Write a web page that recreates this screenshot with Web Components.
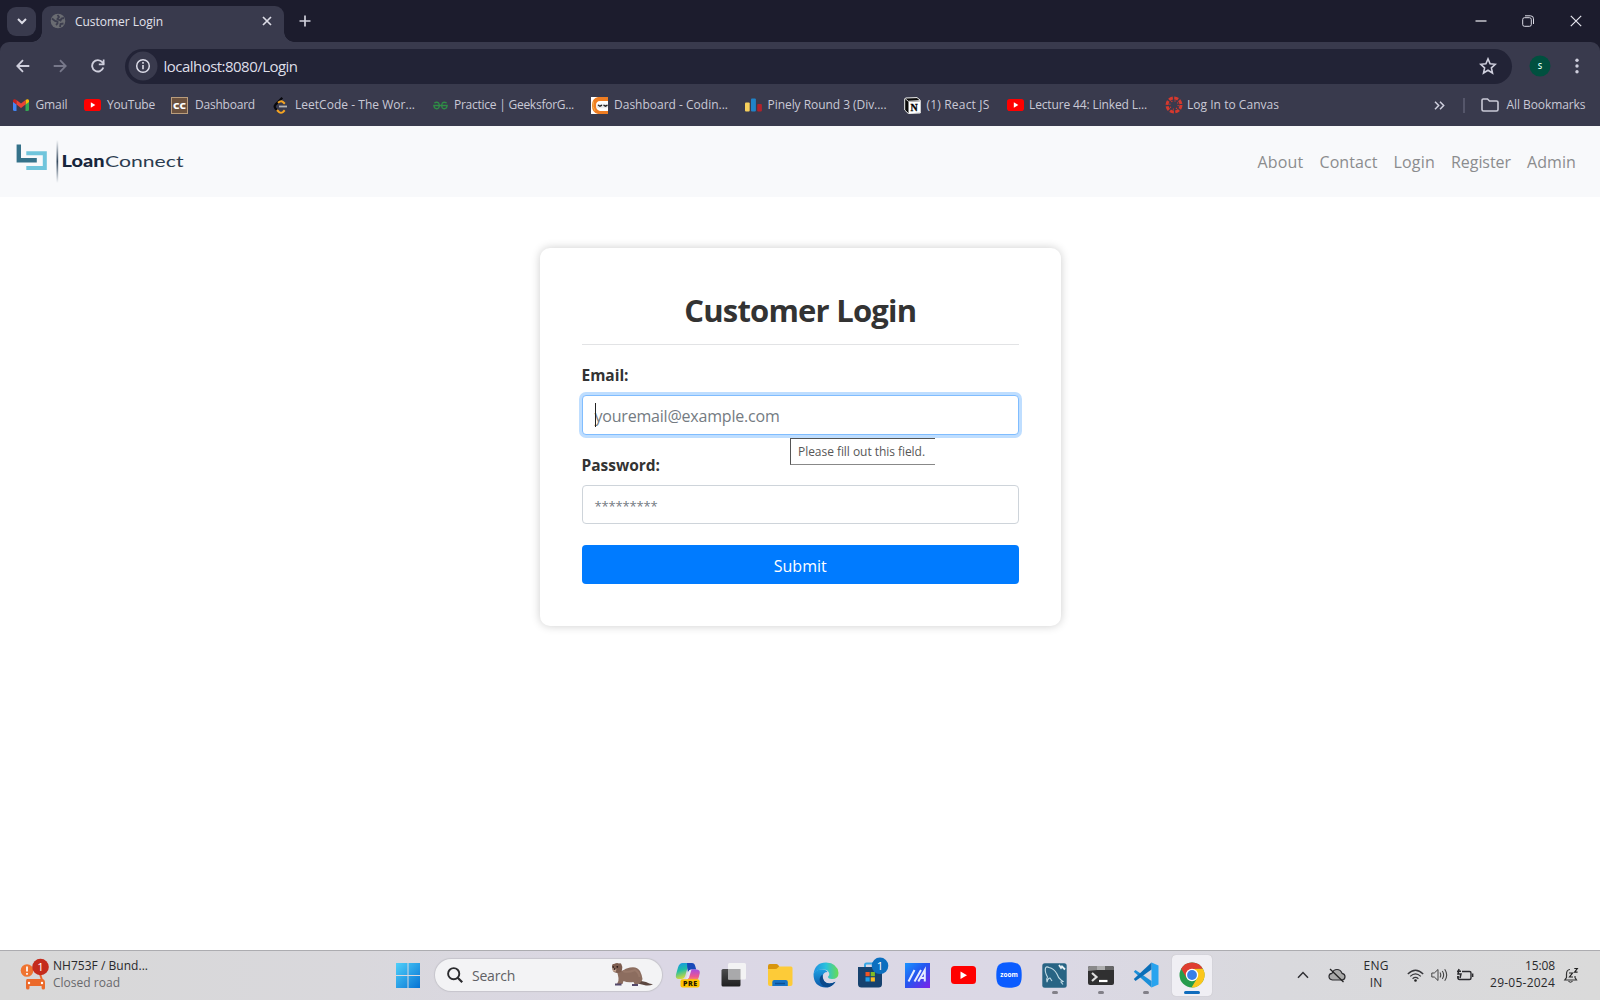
<!DOCTYPE html>
<html lang="en">
<head>
<meta charset="utf-8">
<title>Customer Login</title>
<style>
html,body{margin:0;width:1600px;height:1000px;overflow:hidden;background:#fff;font-family:"Open Sans","Noto Sans",sans-serif}
</style>
</head>
<body>
<desktop-screen></desktop-screen>
<script>
const icons = {
chevDown:[12,12,'<path d="M2 4l4 4 4-4" fill="none" stroke="#dcdce6" stroke-width="2"/>'],
globe:[16,16,'<circle cx="8" cy="8" r="7.300" fill="#6a6c72"/><path d="M2 5.500L5 8l2.500.5v2L6 12M7.500 2L9 4l-1.500 2 3 1.500 1-2L14 5M10 14l.5-3 3-.5" fill="none" stroke="#3c3d4e" stroke-width="1.800"/>'],
close:[10,10,'<path d="M1 1l8 8M9 1L1 9" stroke="#dcdce6" stroke-width="1.700"/>'],
plus:[12,12,'<path d="M6 .5v11M.5 6h11" stroke="#cfcfdb" stroke-width="1.700"/>'],
min:[12,12,'<path d="M.5 6h11" stroke="#f0f0f5" stroke-width="1.200"/>'],
restore:[12,12,'<rect x=".7" y="2.700" width="8.600" height="8.600" rx="1.800" fill="none" stroke="#dcdce6"/><path d="M3 .8h5.500a3 3 0 0 1 3 3V9" fill="none" stroke="#dcdce6"/>'],
winClose:[12,12,'<path d="M.8.8l10.400 10.400M11.200.8L.8 11.200" stroke="#e6e6ee" stroke-width="1.200"/>'],
back:[14,14,'<path d="M13.300 7H1.500M7 1.200L1.300 7 7 12.800" fill="none" stroke="#cfcfdd" stroke-width="1.800"/>'],
fwd:[14,14,'<path d="M.7 7h11.800M7 1.200L12.700 7 7 12.800" fill="none" stroke="#77788a" stroke-width="1.800"/>'],
reload:[14,14,'<path d="M12.300 8.500a5.700 5.700 0 1 1-1-5.300l1.500 1.600" fill="none" stroke="#cfcfdd" stroke-width="1.900"/><path d="M13.500.5v5.700H7.800V4.500h4V.5z" fill="#cfcfdd"/>'],
info:[30,30,'<circle cx="15" cy="15" r="14.500" fill="#393a4d"/><circle cx="15" cy="15" r="6.300" fill="none" stroke="#dcdce8" stroke-width="1.500"/><path d="M15 14v4.200M15 11v1.700" stroke="#dcdce8" stroke-width="1.600"/>'],
star:[18,18,'<path d="M9 1.900l2.100 4.900 5.200.5-3.900 3.500 1.100 5.200L9 13.300 4.500 16l1.100-5.200-3.900-3.500 5.200-.5z" fill="none" stroke="#cfcfdd" stroke-width="1.600"/>'],
avatar:[22,22,'<circle cx="11" cy="11" r="10.500" fill="#00503f"/><text x="11" y="13.800" font-size="8" font-weight="600" text-anchor="middle" fill="#dfe">S</text>'],
dots:[4,16,'<circle cx="2" cy="2.300" r="1.700" fill="#cfcfdd"/><circle cx="2" cy="8" r="1.700" fill="#cfcfdd"/><circle cx="2" cy="13.700" r="1.700" fill="#cfcfdd"/>'],
gmail:[16,12,'<path d="M0 2v8.500Q0 12 1.500 12h2V5z" fill="#4285f4"/><path d="M16 2v8.500q0 1.500-1.500 1.500h-2V5z" fill="#34a853"/><path d="M12.500 1.500V5.500L16 3V1.800C16 0 14.200-.4 12.500.9z" fill="#fbbc04"/><path d="M0 3v-1.200C0 0 1.800-.4 3.500.9V5.500z" fill="#c5221f"/><path d="M3.500 1l4.500 3.500L12.500 1v4.500L8 9 3.500 5.500z" fill="#ea4335"/>'],
yt:[17,12,'<rect width="17" height="12" rx="2.800" fill="#f00"/><path d="M6.800 3.300v5.400L11.300 6z" fill="#fff"/>'],
cc:[17,17,'<rect x=".5" y=".5" width="16" height="16" fill="#6b513f" stroke="#b99c7c"/><text x="8.500" y="12" font-size="9.500" font-weight="800" text-anchor="middle" fill="#fff" textLength="13" lengthAdjust="spacingAndGlyphs">CC</text>'],
leet:[15,17,'<path d="M9.300.8L2.500 7.600Q.8 9.600 2.500 11.500L4 13" fill="none" stroke="#08080d" stroke-width="2.200"/><path d="M4 13l2 2q2 1.500 4 0l1.700-1.700M5 5.700Q8 3.300 10 5l1.800 1.800" fill="none" stroke="#f5a422" stroke-width="2.100"/><path d="M6 9.500h8" stroke="#b3b3b3" stroke-width="1.800"/>'],
gfg:[15,9,'<path d="M.2 4.500h14.600M1.300 2Q4 .5 5.600 2 7 4.500 5.600 7 3.500 8.600 1.500 6.800L1 5M13.700 2Q11 .5 9.400 2 8 4.500 9.400 7q2.100 1.600 4.100-.2L14 5" fill="none" stroke="#2f8d46" stroke-width="1.300"/>'],
ninja:[17,17,'<rect width="17" height="17" fill="#fff"/><path d="M17 0H7Q1 1 1 8.500T7 17h10v-3H9Q5 13 5 8.500T9 4h8z" fill="#ef7d22"/><path d="M2.500 4.500Q1 10 4 14" stroke="#f7ae48" fill="none"/><rect x="5.500" y="6.700" width="11.500" height="4.500" rx="2" fill="#e9e9ec"/><path d="M7 8l2 1.200 2-1M12.500 8.200l2 1 2-1" stroke="#222" stroke-width="1.300" fill="none"/>'],
cf:[17,14,'<rect y="4.500" width="4.700" height="9" rx="1" fill="#f7cf5c"/><rect x="6" y=".5" width="4.900" height="13" rx="1" fill="#2083c9"/><rect x="12.200" y="6" width="4.700" height="7.500" rx="1" fill="#b1222b"/>'],
notion:[17,17,'<path d="M1.500 1L13 .6l3.300 2.700V16L4.300 16.500.7 13V2z" fill="#080808" stroke="#f3f3f3" stroke-width="1"/><path d="M1.300 1.800l3 2.500L16 3.600" fill="none" stroke="#f3f3f3" stroke-width=".9"/><path d="M4.500 4.700l11.500-.5v11.500l-11.500.6z" fill="#fff"/><text x="10.200" y="13.900" font-size="10" font-weight="700" font-family="Liberation Serif" text-anchor="middle" fill="#000" stroke="#000" stroke-width=".3">N</text>'],
canvas:[18,18,'<circle cx="9" cy="9" r="7" fill="none" stroke="#d5392e" stroke-width="3" stroke-dasharray="4.100 1.400"/><circle cx="9" cy="9" r="4.200" fill="none" stroke="#d5392e" stroke-width="1.200" stroke-dasharray="1.100 2.200"/>'],
more:[11,9,'<path d="M1 .7l3.700 3.800L1 8.300M6 .7l3.700 3.800L6 8.300" fill="none" stroke="#cfcfdd" stroke-width="1.500"/>'],
folder:[18,14,'<path d="M1 2.300Q1 1 2.300 1h4.200l2 2h7Q17 3 17 4.300v7.200q0 1.500-1.500 1.500h-13Q1 13 1 11.500z" fill="none" stroke="#c9c9d6" stroke-width="1.600"/>'],
logo:[170,46,'<defs><linearGradient id="v" x2="0" y2="1"><stop stop-color="#34495e" stop-opacity="0"/><stop offset=".5" stop-color="#34495e"/><stop offset="1" stop-color="#34495e" stop-opacity="0"/></linearGradient></defs><path d="M10.300 14.200h18.500v14.800H10.300" fill="none" stroke="#70c5dc" stroke-width="4"/><path d="M2.800 5.500v15.800h18" fill="none" stroke="#35728a" stroke-width="4.400"/><rect x="40.500" y="1" width="1.700" height="43" fill="url(#v)"/><text x="45.500" y="27.500" font-family="Lato" font-weight="900" font-size="16" fill="#17263c" textLength="43" lengthAdjust="spacingAndGlyphs">Loan</text><text x="89" y="27.500" font-family="Lato" font-size="16" fill="#2b3c50" textLength="78.500" lengthAdjust="spacingAndGlyphs">Connect</text>'],
road:[30,32,'<circle cx="7" cy="12.500" r="6.300" fill="#ef7430"/><path d="M7 8.500v5M7 15v1.700" stroke="#fff" stroke-width="1.700"/><path d="M20 16l2 6" stroke="#e8642a" stroke-width="2"/><path d="M7 21h15q3 0 3 4v5q0 1.500-1.700 1.500T21.600 30v-2H9.500v2q0 1.500-1.700 1.500T6 30v-6q0-3 1-3z" fill="#eb6a2b"/><circle cx="9" cy="25" r="1.200" fill="#fff"/><circle cx="22" cy="25" r="1.200" fill="#fff"/><circle cx="20.500" cy="9" r="8.300" fill="#c42b1c"/><text x="20.500" y="13.200" font-size="11.500" text-anchor="middle" fill="#fff">1</text>'],
windows:[24,25,'<defs><linearGradient id="a" x2="1" y2="1"><stop stop-color="#4fd0fa"/><stop offset="1" stop-color="#0672d3"/></linearGradient></defs><path d="M0 0h11.500v12H0zM12.500 0H24v12H12.500zM0 13h11.500v12H0zM12.500 13H24v12H12.500z" fill="url(#a)"/>'],
search:[16,16,'<circle cx="6.700" cy="6.700" r="5.600" fill="none" stroke="#2b2b2e" stroke-width="1.900"/><path d="M10.700 10.700l4.500 4.500" stroke="#2b2b2e" stroke-width="2.200"/>'],
otter:[44,26,'<path d="M27 17q5 3 9 3 3 2 7 2.300-4 2-9 .7-6-1-9-3z" fill="#5c4740"/><path d="M7 9.500q3-1 6-1 2-2 7-3 7-1.500 10 3.500 2 4 2.500 8-1 4-5 5h-3l-1-2q-6 1-10-1l-1 3H7q2-3 1.500-6T7 9.500z" fill="#8c6d5f"/><path d="M13 9q5 2 12-1 4 2 4.500 7" fill="none" stroke="#987869" stroke-width="2"/><path d="M2 4Q2 1.500 4 2q3-1.500 5-.5 2-.7 2.500 1Q13 5 12 8t-5 3Q3 10.500 2.500 7.500z" fill="#7d5d50"/><path d="M2.500 6.500Q4 5 6.500 7.500l-1 2.500Q3 9.500 2.500 8z" fill="#c8a996"/><circle cx="3.200" cy="5" r=".8" fill="#211"/><circle cx="7.300" cy="4.800" r=".9" fill="#211"/><circle cx="4.500" cy="7" r="1" fill="#322"/><path d="M5 22.500h6.500M22 23h6" stroke="#55496b" stroke-width="2"/>'],
copilot:[26,26,'<defs><linearGradient id="b" x2=".3" y2="1"><stop stop-color="#1793ee"/><stop offset=".5" stop-color="#20bda4"/><stop offset="1" stop-color="#d5d93a"/></linearGradient><linearGradient id="c" x2="0" y2="1"><stop stop-color="#a64de0"/><stop offset=".6" stop-color="#ed5691"/><stop offset="1" stop-color="#fa9c58"/></linearGradient></defs><path d="M7.500 1h9q-3 1-4 5l-2.300 8q-1 3-4 3H4Q0 17 1 12.500l2-7Q4.300 1 7.500 1z" fill="url(#b)"/><path d="M12 1h5q2.500 0 3.200 3l1 3.500H17q-3 0-4 3-1-5-1-9.500z" fill="#1749b8"/><path d="M16.500 7.500H21q4.500 0 3.700 4L23.500 16q-1 3-5 3H10q3-1 3.700-4l1-5q.5-2.500 1.800-2.500z" fill="url(#c)"/><path d="M13 10.500q1-3 3.500-3l-2.500 8q-1 2-3 2z" fill="#e9e3f3"/><rect x="5.500" y="17.200" width="19" height="8.300" rx="2" fill="#ffc300"/><text x="15" y="23.900" font-size="7" font-weight="800" text-anchor="middle" fill="#241900" textLength="14">PRE</text>'],
taskview:[26,26,'<defs><linearGradient id="t" x2="0" y2="1"><stop stop-color="#4c4c4e"/><stop offset="1" stop-color="#1f1f20"/></linearGradient></defs><rect x=".5" y="7" width="19" height="17.500" rx="1.500" fill="url(#t)"/><rect x="7" y="1" width="18" height="16.500" rx="1.500" fill="#f5f5f5" opacity=".92"/><rect x="7" y="7" width="12.500" height="10.500" fill="#a9a9ab"/>'],
explorer:[26,24,'<path d="M1 3q0-2 1.800-2h6.500q1 0 2 1.200L12.500 4v5H1z" fill="#d8950d"/><path d="M1 6h7q2 0 3-1.500T13 3.500h11q1.500 0 1.500 1.500v16q0 2-2 2h-20.500Q1 23 1 21z" fill="#fdcb38"/><path d="M5.300 23v-4q0-2 2-2h11.500q2 0 2 2v4z" fill="#1673c4"/><path d="M8 20.500h10" stroke="#0b4f94" stroke-width="1.500"/>'],
edge:[26,26,'<defs><linearGradient id="e" x2="1"><stop stop-color="#218ee0"/><stop offset=".5" stop-color="#2ac2dd"/><stop offset="1" stop-color="#6adc51"/></linearGradient><linearGradient id="f" x2="0" y2="1"><stop stop-color="#1e9fe2"/><stop offset="1" stop-color="#0b57a8"/></linearGradient></defs><path d="M.5 12Q2 .5 13 .5q11.500.5 12.500 10.500 0 6-6.500 6-4 0-4-2.200 1.500-1.300 1.300-3Q15.500 7.500 10 7.500 3.500 7.500.5 12z" fill="url(#e)"/><path d="M.5 12Q3 7 9.500 7.500q4 0 5 2.500-4.500 0-5 5 .5 6 7 6.500 3 0 6-1.800Q19 25.500 13 25.500.5 25 .5 12z" fill="url(#f)"/><path d="M9.500 12.500q-4 3-2.500 7.500 2 5 7.500 5.300 5-1 8-5.600-3 1.900-6.500 1.800-6.500-.7-6.500-9z" fill="#0a498b"/>'],
store:[32,32,'<path d="M8 10V8q0-1.500 1.500-1.500h8" fill="none" stroke="#35a6e5" stroke-width="2"/><path d="M1 10h24v17q0 3.500-3.500 3.500h-17Q1 30.500 1 27z" fill="#16426f"/><path d="M8.500 15h4.200v4.200H8.500z" fill="#f05523"/><path d="M13.700 15h4.200v4.200h-4.200z" fill="#80bc24"/><path d="M8.500 20.300h4.200v4.200H8.500z" fill="#20a1ed"/><path d="M13.700 20.300h4.200v4.200h-4.200z" fill="#fdba20"/><circle cx="23" cy="8.800" r="8.300" fill="#0c6fbf"/><text x="23" y="13" font-size="11.500" text-anchor="middle" fill="#fff">1</text>'],
asus:[25,25,'<defs><linearGradient id="g" x2="1" y2="1"><stop stop-color="#1a94ff"/><stop offset=".45" stop-color="#2456ef"/><stop offset="1" stop-color="#7d20e9"/></linearGradient></defs><path d="M0 0h25v25H0z" fill="url(#g)"/><path d="M3.500 18.500L9.500 7M9.500 18.500L16 7M13.300 18.500L19.800 7v11.500M15.500 15h4" fill="none" stroke="#e5edff" stroke-width="2"/>'],
youtube:[25,18,'<rect width="25" height="18" rx="3.500" fill="#f00"/><path d="M9.500 5.500v7.500l6.500-3.700z" fill="#fff"/>'],
zoom:[26,26,'<path d="M13 .3C23 .3 25.700 3 25.700 13S23 25.700 13 25.700.3 23 .3 13 3 .3 13 .3z" fill="#0b5cff"/><text x="13" y="15.300" font-size="7" font-weight="700" fill="#fff" text-anchor="middle" textLength="17.500" lengthAdjust="spacingAndGlyphs">zoom</text>'],
mysql:[25,25,'<rect x=".3" y=".3" width="24.400" height="24.400" rx="2.500" fill="#286484"/><path d="M5 19q-1-3 .5-5Q2.500 9 3.500 5q1-2 3.500-.5 5 1 8 6.500 1.500 4.500 4 6l2 1.500-2 .5 2 2.500M5 19q1-4 3-4l2 3" fill="none" stroke="#c3dce6" stroke-width="1.100"/><path d="M17 2l2 3 1-1.500 3 3" fill="none" stroke="#e7f1f5" stroke-width="1.800"/>'],
terminal:[26,19,'<rect width="26" height="19" rx="2" fill="#303031"/><path d="M0 5V2Q0 0 2 0h7v4z" fill="#8a8a8b"/><path d="M9 0h8v4H9z" fill="#adadae"/><path d="M17 0h7q2 0 2 2v2h-9z" fill="#666667"/><path d="M4 7l4.500 4L4 15" fill="none" stroke="#ddd" stroke-width="2.200"/><path d="M11 15h8.500" stroke="#fff" stroke-width="2.200"/>'],
vscode:[26,26,'<path d="M18.500.5l7 3v19l-7 3z" fill="#28a4ef"/><path d="M2.500 8L.8 9.800 18.500 25.500V19z" fill="#1b8fd8"/><path d="M18.500.5v7L2.500 19 .8 17z" fill="#0b6fb8"/>'],
chrome:[26,26,'<circle cx="13" cy="13" r="12.500" fill="#279c4c"/><path d="M2.200 6.700a12.500 12.500 0 0 1 21.700 0L13 7 7.600 16.100z" fill="#df3d30"/><path d="M23.900 6.700A12.500 12.500 0 0 1 12.500 25.500L18.300 16 13 7z" fill="#fbc61b"/><circle cx="13" cy="13" r="6.200" fill="#fff"/><circle cx="13" cy="13" r="4.900" fill="#397fe8"/>'],
chevUp:[12,8,'<path d="M1 6.700l5-5.200 5 5.200" fill="none" stroke="#303035" stroke-width="1.500"/>'],
cloud:[18,16,'<path d="M4.500 13Q1 12.500 1 9.500T4 6.300Q5.500 2.500 9 2.500t5 3.800q3 .5 3 3.400T14 13z" fill="#aaa" stroke="#2c2c30" stroke-width="1.200"/><path d="M2 2l13.500 13" stroke="#222" stroke-width="1.300"/>'],
wifi:[17,13,'<path d="M.8 5Q8.500-2.500 16.200 5M3.200 7.400q5.300-5 10.600 0M5.600 9.700q2.900-2.600 5.800 0" fill="none" stroke="#38383c" stroke-width="1.300"/><circle cx="8.500" cy="11.500" r="1.300" fill="#222"/>'],
volume:[17,14,'<path d="M.8 5h2.500L7 1.500v11L3.300 9H.8z" fill="none" stroke="#444" stroke-width="1"/><path d="M9 4.500q1.500 2.500 0 5M11.300 3q2.700 4 0 8M13.700 1.200q4 5.800 0 11.600" fill="none" stroke="#444" stroke-width="1.100"/>'],
battery:[18,14,'<path d="M6 3.500h7.500q1.500 0 1.500 1.500v5q0 1.500-1.500 1.500h-10Q2 11.500 2 10V8M16.700 5.500v3.500" fill="none" stroke="#2b2b2f" stroke-width="1.400"/><path d="M3 1l-1 5h3l-1 4M1 3.200h4M2 10.500V8" fill="none" stroke="#2b2b2f" stroke-width="1.500"/>'],
bell:[16,17,'<path d="M7 2.500Q3.500 2.700 3.500 7v3.500L1.800 13h11.700L12 10.500V9" fill="none" stroke="#333" stroke-width="1.200"/><path d="M5.500 14q2 2.500 4 0" fill="none" stroke="#333" stroke-width="1.200"/><path d="M6 6h3.500L6.500 10H10M11.300 1.500h3l-2.700 3.700h3" fill="none" stroke="#222" stroke-width="1.200"/>']
};
class Base extends HTMLElement{
  connectedCallback(){
    if(!this.shadowRoot) this.attachShadow({mode:'open'}).innerHTML=this.view();
    const ml=this.getAttribute('ml'); if(ml) this.style.marginLeft=ml+'px';
    this.ready && this.ready();
  }
}
// Inline vector icon, picked by name.
class UiIcon extends Base{
  view(){const [w,h,b]=icons[this.getAttribute('name')];
    return `<style>:host{display:block;flex:none;width:${w}px;height:${h}px}svg{display:block;font-family:"Open Sans",sans-serif}</style><svg width="${w}" height="${h}" viewBox="0 0 ${w} ${h}">${b}</svg>`}
}
// One line of text, tracked so that it fills its measure.
class UiText extends Base{
  view(){return `<style>:host{display:block;flex:none;white-space:nowrap;width:${this.getAttribute('w')}px;font-size:${this.getAttribute('size')||12}px}span{display:inline-block}</style><span><slot></slot></span>`}
  ready(){const s=this.shadowRoot.querySelector('span'),w=+this.getAttribute('w');
    this.style.letterSpacing=((w-s.getBoundingClientRect().width)/this.textContent.length)+'px'}
}
class TabStrip extends Base{
  view(){return `<style>:host{display:flex;height:42px;background:#1c1c2d;color:#e2e2ec;align-items:center}
  .menu{width:29px;height:29px;margin-left:7px;border-radius:9px;background:#393a4d;display:flex;align-items:center;justify-content:center}
  .tab{position:relative;align-self:flex-end;display:flex;align-items:center;box-sizing:border-box;width:242px;height:36px;margin-left:6px;padding:0 0 6px 8px;border-radius:9px 9px 0 0;background:#393a4d}
  .tab:before,.tab:after{content:"";position:absolute;bottom:0;width:10px;height:10px}
  .tab:before{left:-10px;background:radial-gradient(circle at 0 0,transparent 9.500px,#393a4d 10px)}
  .tab:after{right:-10px;background:radial-gradient(circle at 100% 0,transparent 9.500px,#393a4d 10px)}</style>
  <div class="menu"><ui-icon name="chevDown"></ui-icon></div>
  <div class="tab"><ui-icon name="globe"></ui-icon><ui-text ml="9" w="88">Customer Login</ui-text><ui-icon ml="98.500" name="close"></ui-icon></div>
  <ui-icon ml="14.500" name="plus"></ui-icon>
  <ui-icon ml="1164.500" name="min"></ui-icon><ui-icon ml="35" name="restore"></ui-icon><ui-icon ml="36" name="winClose"></ui-icon>`}
}
class AddressBar extends Base{
  view(){return `<style>:host{display:flex;align-items:center;height:48px}
  .box{display:flex;align-items:center;width:1387px;height:35px;margin-left:20px;border-radius:18px;background:#222336;color:#dedee8}i{flex:1}</style>
  <ui-icon ml="16" name="back"></ui-icon><ui-icon ml="23" name="fwd"></ui-icon><ui-icon ml="24" name="reload"></ui-icon>
  <div class="box"><ui-icon ml="3" name="info"></ui-icon><ui-text ml="5.500" w="134" size="15">localhost:8080/Login</ui-text><i></i><ui-icon name="star" style="margin-right:15.500px"></ui-icon></div>
  <ui-icon ml="17" name="avatar"></ui-icon><ui-icon ml="24" name="dots"></ui-icon>`}
}
class BookmarkItem extends Base{
  view(){const a=n=>this.getAttribute(n);
    return `<style>:host{display:flex;align-items:center;flex:none}ui-text{margin-top:-1px}</style><ui-icon name="${a('icon')}"></ui-icon><ui-text ml="${a('pad')||6}" w="${a('w')}">${a('label')}</ui-text>`}
}
class BookmarksBar extends Base{
  view(){return `<style>:host{display:flex;align-items:center;height:30px;color:#c9c9d6}i{width:2px;height:15px;margin-left:18px;background:#55566a}</style>
  <bookmark-item ml="13" icon="gmail" label="Gmail" w="32" pad="6.500"></bookmark-item>
  <bookmark-item ml="16.500" icon="yt" label="YouTube" w="48"></bookmark-item>
  <bookmark-item ml="16" icon="cc" label="Dashboard" w="60" pad="7"></bookmark-item>
  <bookmark-item ml="18" icon="leet" label="LeetCode - The Wor..." w="120" pad="7"></bookmark-item>
  <bookmark-item ml="18" icon="gfg" label="Practice | GeeksforG..." w="120"></bookmark-item>
  <bookmark-item ml="17" icon="ninja" label="Dashboard - Codin..." w="114"></bookmark-item>
  <bookmark-item ml="16.500" icon="cf" label="Pinely Round 3 (Div...." w="119"></bookmark-item>
  <bookmark-item ml="17" icon="notion" label="(1) React JS" w="63"></bookmark-item>
  <bookmark-item ml="17" icon="yt" label="Lecture 44: Linked L..." w="118" pad="5.500"></bookmark-item>
  <bookmark-item ml="17.500" icon="canvas" label="Log In to Canvas" w="92" pad="4.500"></bookmark-item>
  <ui-icon ml="155" name="more"></ui-icon><i></i>
  <bookmark-item ml="16" icon="folder" label="All Bookmarks" w="79" pad="7.500"></bookmark-item>`}
}
class SiteHeader extends Base{
  view(){return `<style>:host{display:flex;align-items:center;height:71px;background:#f8f9fb;color:#8b8c8e}i{flex:1}ui-text{padding-top:1px}</style>
  <ui-icon ml="16" name="logo"></ui-icon><i></i>
  <ui-text size="16" w="46">About</ui-text><ui-text ml="16" size="16" w="58">Contact</ui-text><ui-text ml="16" size="16" w="41.500">Login</ui-text><ui-text ml="16" size="16" w="60">Register</ui-text><ui-text ml="16" size="16" w="49" style="margin-right:24px">Admin</ui-text>`}
}
class FormField extends Base{
  view(){const f=this.hasAttribute('focused');return `<style>:host{display:block;color:#333}
  .l{font-weight:700;line-height:24px;margin-bottom:8px}
  .i{position:relative;display:flex;align-items:center;box-sizing:border-box;height:${f?40:39}px;padding:2px 0 0 12px;border:1px solid ${f?'#80bdff':'#ced4da'};border-radius:4px;color:#747b82;background:#fff;${f?'box-shadow:0 0 0 3px #bfdeff':''}}
  ${f?'.i:before{content:"";position:absolute;left:12px;top:7px;width:1px;height:24px;background:#222}':''}</style>
  <div class="l"><slot name="label"></slot></div><div class="i"><slot></slot></div>`}
}
class LoginCard extends Base{
  view(){return `<style>:host{display:block;position:relative;box-sizing:border-box;width:521px;height:378px;margin:51px 0 0 540px;padding:40px 42px 0 41.500px;border-radius:10px;background:#fff;box-shadow:0 0 10px rgba(0,0,0,.2)}
  .h{display:flex;justify-content:center;color:#333;font-weight:700;height:57px;line-height:44px;border-bottom:1px solid #e2e3e5;box-sizing:border-box}
  form-field{margin-top:18px}.b{height:39px;margin-top:21px;border-radius:4px;background:#007bff;color:#fff;display:flex;align-items:center;justify-content:center;box-sizing:border-box;padding-top:2px}
  .tip{position:absolute;left:250px;top:190px;width:145px;height:27px;box-sizing:border-box;border:1px solid #555;border-bottom-color:#888;border-right:0;background:#fff;color:#575757;display:flex;align-items:center;padding-left:7px}</style>
  <div class="h"><ui-text size="31" w="232">Customer Login</ui-text></div>
  <form-field focused><ui-text slot="label" w="47" size="15.500">Email:</ui-text><ui-text w="185" size="16">youremail@example.com</ui-text></form-field>
  <form-field><ui-text slot="label" w="78.500" size="15.500">Password:</ui-text><ui-text w="63" size="13">*********</ui-text></form-field>
  <div class="b"><ui-text w="53" size="16">Submit</ui-text></div>
  <div class="tip"><ui-text w="127">Please fill out this field.</ui-text></div>`}
}
class TaskButton extends Base{
  view(){const r=this.getAttribute('state'),on=r=='active';return `<style>:host{display:flex;position:relative;align-items:center;justify-content:center;flex:none;width:45.800px;height:50px}
  .t{display:flex;align-items:center;justify-content:center;width:40px;height:41px;border-radius:4px;${on?'background:#f0eff4;box-shadow:0 0 1px #aaa':''}}
  .m{position:absolute;bottom:6px;left:calc(50% - ${on?8:3}px);width:${on?16:6}px;height:3px;border-radius:2px;background:${on?'#0f6cbd':'#828088'}}</style>
  <div class="t"><ui-icon name="${this.getAttribute('icon')}"></ui-icon></div>${r?'<div class="m"></div>':''}`}
}
class TaskBar extends Base{
  view(){return `<style>:host{display:flex;align-items:center;box-sizing:border-box;height:50px;padding-bottom:1px;border-top:1px solid #acacb0;background:linear-gradient(90deg,#d8d8d8,#d9d8dc 22%,#dbd7e5 40%,#dbd8e5 65%,#d9d9dd 80%,#dadada);color:#29292c}
  .two{flex:none;line-height:17px;margin-top:-2px}.s{flex:none;display:flex;align-items:center;margin-left:15px;width:227px;height:32px;border-radius:16px;background:#f3f3f5;box-shadow:0 0 1px 1px #c6c5cc;color:#606064}
  .g{color:#68686c}.c{display:flex;flex-direction:column;align-items:center}.r{display:flex;flex-direction:column;align-items:flex-end}</style>
  <ui-icon ml="20" name="road" style="margin-top:-2px"></ui-icon>
  <div class="two" style="margin-left:3px"><ui-text w="95">NH753F / Bund...</ui-text><ui-text class="g" w="67">Closed road</ui-text></div>
  <ui-icon ml="248" name="windows"></ui-icon>
  <div class="s"><ui-icon ml="12" name="search"></ui-icon><ui-text ml="9" w="43" size="14">Search</ui-text><ui-icon ml="95" name="otter"></ui-icon></div>
  <task-button ml="3.500" icon="copilot"></task-button><task-button icon="taskview"></task-button><task-button icon="explorer"></task-button><task-button icon="edge"></task-button><task-button icon="store" style="padding-left:3px;width:42.800px;padding-bottom:4px;height:46px"></task-button><task-button icon="asus"></task-button><task-button icon="youtube"></task-button><task-button icon="zoom"></task-button><task-button icon="mysql" state="open"></task-button><task-button icon="terminal" state="open"></task-button><task-button icon="vscode" state="open"></task-button><task-button icon="chrome" state="active"></task-button>
  <ui-icon ml="81.500" name="chevUp"></ui-icon><ui-icon ml="19" name="cloud"></ui-icon>
  <div class="two c" style="margin-left:18px"><ui-text w="25">ENG</ui-text><ui-text w="12.500">IN</ui-text></div>
  <ui-icon ml="18" name="wifi"></ui-icon><ui-icon ml="7.500" name="volume"></ui-icon><ui-icon ml="8" name="battery"></ui-icon>
  <div class="two r" style="margin-left:16px"><ui-text w="30">15:08</ui-text><ui-text w="65">29-05-2024</ui-text></div>
  <ui-icon ml="8" name="bell"></ui-icon>`}
}
class DesktopScreen extends Base{
  view(){return `<style>:host{display:flex;flex-direction:column;width:1600px;height:1000px}.chrome{background:#1c1c2d}.tools{box-sizing:border-box;height:84px;background:#393a4d;border-radius:9px 9px 0 0}main{flex:1;background:#fff}</style>
  <div class="chrome"><tab-strip></tab-strip><div class="tools"><address-bar></address-bar><bookmarks-bar></bookmarks-bar></div></div>
  <site-header></site-header><main><div style="display:flex"><login-card></login-card></div></main><task-bar></task-bar>`}
}
for (const [n,c] of Object.entries({'ui-icon':UiIcon,'ui-text':UiText,'tab-strip':TabStrip,'address-bar':AddressBar,'bookmark-item':BookmarkItem,'bookmarks-bar':BookmarksBar,'site-header':SiteHeader,'form-field':FormField,'login-card':LoginCard,'task-button':TaskButton,'task-bar':TaskBar,'desktop-screen':DesktopScreen})) customElements.define(n,c);
</script>
</body>
</html>
